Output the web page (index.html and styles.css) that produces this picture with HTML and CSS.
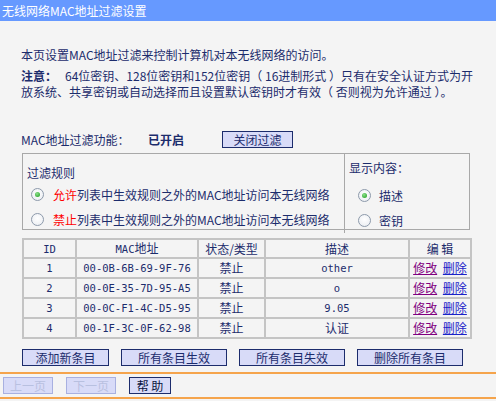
FILE: index.html
```html
<!DOCTYPE html>
<html lang="zh-CN">
<head>
<meta charset="utf-8">
<title>无线网络MAC地址过滤设置</title>
<link rel="stylesheet" href="styles.css">
</head>
<body>
<div class="title">无线网络MAC地址过滤设置</div>
<div class="content">
  <p class="intro">本页设置MAC地址过滤来控制计算机对本无线网络的访问。</p>
  <p class="note"><b class="note-label">注意：</b><span>64位密钥、128位密钥和152位密钥（ 16进制形式 ）只有在安全认证方式为开</span><br><span>放系统、共享密钥或自动选择而且设置默认密钥时才有效（ 否则视为允许通过 ）。</span></p>

  <div class="status-row">
    <span class="status-label">MAC地址过滤功能：</span>
    <b class="status-value">已开启</b>
    <button class="btn btn-toggle">关闭过滤</button>
  </div>

  <div class="rules">
    <div class="rules-main">
      <div class="rules-head">过滤规则</div>
      <label class="radio-row"><span class="radio checked"></span><span><span class="red">允许</span>列表中生效规则之外的MAC地址访问本无线网络</span></label>
      <label class="radio-row"><span class="radio"></span><span><span class="red">禁止</span>列表中生效规则之外的MAC地址访问本无线网络</span></label>
    </div>
    <div class="rules-side">
      <div class="side-head">显示内容：</div>
      <label class="radio-row side"><span class="radio checked"></span><span>描述</span></label>
      <label class="radio-row side"><span class="radio"></span><span>密钥</span></label>
    </div>
  </div>

  <table class="list">
    <colgroup>
      <col class="c-id"><col class="c-mac"><col class="c-state"><col class="c-desc"><col class="c-edit">
    </colgroup>
    <thead>
      <tr><th class="mono">ID</th><th><span class="mono">MAC</span>地址</th><th>状态/类型</th><th>描述</th><th>编 辑</th></tr>
    </thead>
    <tbody>
      <tr><td class="mono">1</td><td class="mono">00-0B-6B-69-9F-76</td><td>禁止</td><td class="mono">other</td><td class="edit"><a class="visited" href="#">修改</a> <a href="#">删除</a></td></tr>
      <tr><td class="mono">2</td><td class="mono">00-0E-35-7D-95-A5</td><td>禁止</td><td class="mono">o</td><td class="edit"><a class="visited" href="#">修改</a> <a href="#">删除</a></td></tr>
      <tr><td class="mono">3</td><td class="mono">00-0C-F1-4C-D5-95</td><td>禁止</td><td class="mono">9.05</td><td class="edit"><a class="visited" href="#">修改</a> <a href="#">删除</a></td></tr>
      <tr><td class="mono">4</td><td class="mono">00-1F-3C-0F-62-98</td><td>禁止</td><td>认证</td><td class="edit"><a class="visited" href="#">修改</a> <a href="#">删除</a></td></tr>
    </tbody>
  </table>

  <div class="actions">
    <button class="btn btn-add">添加新条目</button>
    <button class="btn btn-wide">所有条目生效</button>
    <button class="btn btn-wide">所有条目失效</button>
    <button class="btn btn-wide">删除所有条目</button>
  </div>
</div>
<div class="nav">
  <button class="btn btn-nav" disabled>上一页</button>
  <button class="btn btn-nav" disabled>下一页</button>
  <button class="btn btn-help">帮 助</button>
</div>
</body>
</html>
```
FILE: styles.css
```css
html, body {
  margin: 0;
  padding: 0;
  background: #f4f4f4;
}
body {
  font-family: "Noto Sans CJK SC", "Noto Sans", sans-serif;
  font-size: 12px;
  color: #1c2c6c;
  line-height: 16px;
}
.title {
  height: 21px;
  line-height: 21px;
  background: #6699ff;
  color: #ffffff;
  font-size: 12px;
  padding-left: 2px;
}
.content {
  padding: 0 26px 0 22px;
}
.intro {
  margin: 26px 0 0 -1px;
}
.note {
  margin: 5px 0 0 -1px;
  width: 470px;
  white-space: nowrap;
}
.note-label {
  display: inline-block;
  font-weight: bold;
  width: 44px;
}
.status-row {
  display: flex;
  align-items: center;
  height: 17px;
  margin-top: 31px;
}
.status-label {
  width: 127px;
  margin-left: -1px;
}
.status-value {
  width: 74px;
  font-size: 12px;
}
.btn {
  font-family: "Noto Sans CJK SC", "Noto Sans", sans-serif;
  font-size: 12px;
  color: #1c2c6c;
  background: #d8dbf8;
  border: 1px solid #1c2c6c;
  height: 17px;
  padding: 0;
  line-height: 15px;
  margin: 0;
}
.btn-toggle {
  width: 71px;
}
.rules {
  display: grid;
  grid-template-columns: 321px 127px;
  border: 1px solid #a8a8a8;
  margin-top: 5px;
  width: 448px;
  box-sizing: border-box;
  height: 77px;
}
.rules-main {
  padding: 11px 0 0 4px;
}
.rules-side {
  border-left: 1px solid #a8a8a8;
  padding: 6px 0 0 0;
}
.rules-head {
  height: 17px;
}
.side-head {
  height: 16px;
  padding-left: 4px;
  margin-bottom: 7px;
}
.radio-row {
  display: flex;
  align-items: center;
  gap: 9px;
  height: 25px;
  padding-left: 4px;
}
.radio-row.side {
  padding-left: 13px;
  gap: 8px;
}
.radio {
  width: 11px;
  height: 11px;
  border-radius: 50%;
  border: 1px solid #8d9aab;
  background: radial-gradient(circle at 50% 40%, #ffffff 0%, #e8ebf0 100%);
  display: inline-flex;
  align-items: center;
  justify-content: center;
  flex: none;
}
.radio.checked::after {
  content: "";
  width: 5px;
  height: 5px;
  border-radius: 50%;
  background: radial-gradient(circle at 40% 35%, #8ee08e 0%, #2ea82e 80%);
}
.red {
  color: #ff0000;
}
.list {
  margin-top: 8px;
  width: 448px;
  border-collapse: collapse;
  table-layout: fixed;
}
.c-id { width: 53px; }
.c-mac { width: 122px; }
.c-state { width: 67px; }
.c-desc { width: 144px; }
.c-edit { width: 62px; }
.list tr {
  height: 20px;
}
.list thead tr {
  height: 19px;
}
.list th, .list td {
  border: 2px solid #c4c4c4;
  text-align: center;
  font-weight: normal;
  padding: 0;
  font-size: 12px;
  white-space: nowrap;
}
.list .mono,
.mono {
  font-family: "DejaVu Sans Mono", "Noto Sans CJK SC", monospace;
  font-size: 10.5px;
}
.edit a {
  color: #1a23c8;
  text-decoration: underline;
}
.edit a.visited {
  color: #800080;
  margin-right: 3px;
}
.actions {
  display: flex;
  gap: 12px;
  margin-top: 10px;
}
.btn-add { width: 87px; }
.btn-wide { width: 106px; }
.nav {
  margin-top: 6px;
  border-top: 2px solid #f5a44c;
  border-bottom: 2px solid #f5a44c;
  padding: 3px 0 3px 3px;
  display: flex;
  gap: 13px;
}
.btn-nav {
  width: 50px;
  color: #b8c0e0;
  border-color: #a8b0e0;
}
.btn-help {
  width: 42px;
  color: #0a1440;
}
```
